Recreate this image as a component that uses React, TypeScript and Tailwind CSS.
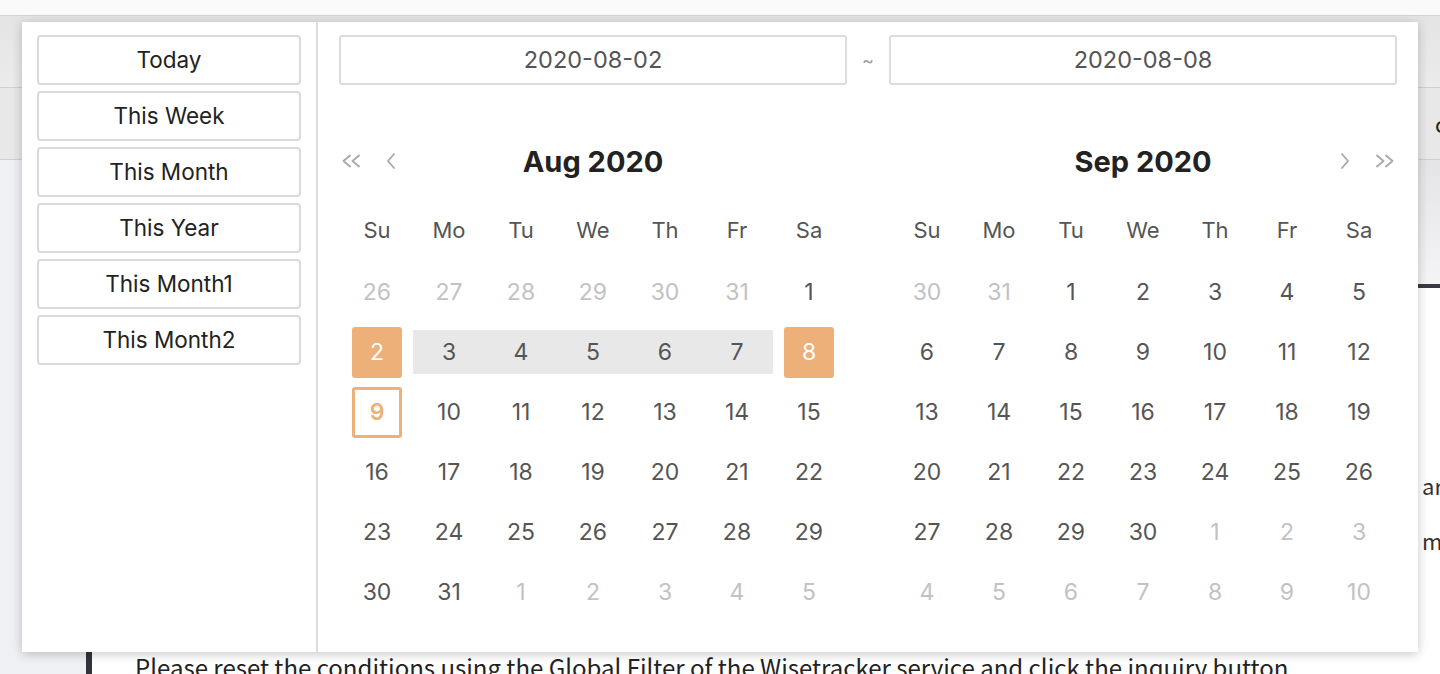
import React from "react";

type Cell = { d: number; muted?: boolean; kind?: "start" | "end" | "range" | "today" };

const aug: Cell[] = [
  ...[26, 27, 28, 29, 30, 31].map((d) => ({ d, muted: true })),
  { d: 1 },
  { d: 2, kind: "start" },
  ...[3, 4, 5, 6, 7].map((d) => ({ d, kind: "range" as const })),
  { d: 8, kind: "end" },
  { d: 9, kind: "today" },
  ...Array.from({ length: 22 }, (_, i) => ({ d: 10 + i })),
  ...[1, 2, 3, 4, 5].map((d) => ({ d, muted: true })),
];

const sep: Cell[] = [
  ...[30, 31].map((d) => ({ d, muted: true })),
  ...Array.from({ length: 30 }, (_, i) => ({ d: 1 + i })),
  ...[1, 2, 3, 4, 5, 6, 7, 8, 9, 10].map((d) => ({ d, muted: true })),
];

const weekdays = ["Su", "Mo", "Tu", "We", "Th", "Fr", "Sa"];

function DoubleLeft() {
  return (
    <svg width="22" height="14" viewBox="0 0 22 14" fill="none" stroke="#aaaaaa" strokeWidth="1.9" strokeLinecap="round" strokeLinejoin="round">
      <path d="M10 1.5 L3.5 7 L10 12.5" />
      <path d="M19 1.5 L12.5 7 L19 12.5" />
    </svg>
  );
}
function SingleLeft() {
  return (
    <svg width="12" height="18" viewBox="0 0 12 18" fill="none" stroke="#aaaaaa" strokeWidth="1.9" strokeLinecap="round" strokeLinejoin="round">
      <path d="M9 2 L3 9 L9 16" />
    </svg>
  );
}
function DoubleRight() {
  return (
    <svg width="22" height="14" viewBox="0 0 22 14" fill="none" stroke="#aaaaaa" strokeWidth="1.9" strokeLinecap="round" strokeLinejoin="round">
      <path d="M3 1.5 L9.5 7 L3 12.5" />
      <path d="M12 1.5 L18.5 7 L12 12.5" />
    </svg>
  );
}
function SingleRight() {
  return (
    <svg width="12" height="18" viewBox="0 0 12 18" fill="none" stroke="#aaaaaa" strokeWidth="1.9" strokeLinecap="round" strokeLinejoin="round">
      <path d="M3 2 L9 9 L3 16" />
    </svg>
  );
}

function DayCell({ c }: { c: Cell }) {
  if (c.kind === "start" || c.kind === "end") {
    return (
      <div className="h-[60px] flex items-center justify-center">
        <div className="w-[50px] h-[51px] rounded-[3px] bg-[#edb078] text-white flex items-center justify-center">{c.d}</div>
      </div>
    );
  }
  if (c.kind === "today") {
    return (
      <div className="h-[60px] flex items-center justify-center">
        <div className="w-[50px] h-[51px] rounded-[3px] border-[3px] border-[#edb078] text-[#edb078] font-semibold flex items-center justify-center">{c.d}</div>
      </div>
    );
  }
  if (c.kind === "range") {
    return (
      <div className="h-[60px] flex items-center">
        <div className="w-full h-[44px] bg-[#e8e8e8] text-[#555555] flex items-center justify-center">{c.d}</div>
      </div>
    );
  }
  return (
    <div className={"h-[60px] flex items-center justify-center " + (c.muted ? "text-[#c2c2c2]" : "text-[#555555]")}>{c.d}</div>
  );
}

function Calendar({ title, cells, side }: { title: string; cells: Cell[]; side: "left" | "right" }) {
  return (
    <div className="w-[508px]">
      <div className="h-[74px] grid grid-cols-[1fr_auto_1fr] items-center">
        <div className="flex items-center">
          {side === "left" && (
            <div className="flex items-center pl-[1px] gap-[23px]">
              <DoubleLeft />
              <SingleLeft />
            </div>
          )}
        </div>
        <div className="text-[29px] font-bold text-[#222222] leading-none">{title}</div>
        <div className="flex items-center justify-end">
          {side === "right" && (
            <div className="flex items-center pr-[1px] gap-[23px]">
              <SingleRight />
              <DoubleRight />
            </div>
          )}
        </div>
      </div>
      <div className="px-[2px]">
        <div className="grid grid-cols-7 h-[64px] items-center text-center text-[#555555] text-[22px]">
          {weekdays.map((w) => (
            <div key={w}>{w}</div>
          ))}
        </div>
        <div className="grid grid-cols-7 text-center text-[23px]">
          {cells.map((c, i) => (
            <DayCell key={i} c={c} />
          ))}
        </div>
      </div>
    </div>
  );
}

export default function App() {
  const presets = ["Today", "This Week", "This Month", "This Year", "This Month1", "This Month2"];
  return (
    <div className="relative w-[1440px] h-[674px] overflow-hidden bg-[#eef0f4] font-['Noto_Sans_CJK_KR',sans-serif]">
      {/* background page */}
      <div className="h-[16px] bg-[#fafafa] border-b border-[#d4d4d4]" />
      <div className="h-[72px] bg-gradient-to-b from-[#e4e4e4] to-[#ebebeb] border-b border-[#d0d0d0]" />
      <div className="h-[72px] bg-[#e8e8e8] border-b border-[#d0d0d0] flex items-center justify-end">
        <div className="w-[5px] overflow-hidden whitespace-nowrap text-[22px] text-[#222222]">ca</div>
      </div>
      <div className="flex">
        <div className="w-[86px] shrink-0" />
        <div className="flex-1 bg-white">
          <div className="h-[124px] bg-gradient-to-b from-[#e4e4e6] to-[#f4f4f6]" />
          <div className="h-[4px] bg-[#3a3a44]" />
          <div className="flex justify-end">
            <div className="w-[18px] overflow-hidden whitespace-nowrap pt-[170px] text-[22px] leading-[55px] text-[#333333]">
              <div>are</div>
              <div>m</div>
            </div>
          </div>
          <div className="mt-[82px] border-l-[6px] border-[#33333d] pl-[43px] text-[24px] leading-[33px] text-[#222222] whitespace-nowrap">
            Please reset the conditions using the Global Filter of the Wisetracker service and click the inquiry button
          </div>
        </div>
      </div>

      {/* date range popup */}
      <div className="absolute left-[22px] top-[22px] w-[1396px] h-[630px] bg-white shadow-[0_2px_10px_rgba(0,0,0,0.22)] flex font-['Inter',sans-serif] text-[22px]">
        <div className="w-[296px] shrink-0 border-r-2 border-[#dddddd] pl-[15px] pt-[13px] flex flex-col gap-[6px]">
          {presets.map((p) => (
            <div key={p} className="w-[264px] h-[50px] border-2 border-[#dadada] rounded-[4px] flex items-center justify-center text-[#222222] text-[22.5px]">
              {p}
            </div>
          ))}
        </div>
        <div className="flex-1 pl-[21px] pr-[21px] pt-[13px]">
          <div className="flex items-center">
            <div className="w-[508px] h-[50px] border-2 border-[#dddddd] rounded-[3px] flex items-center justify-center text-[#555555] text-[23.5px]">2020-08-02</div>
            <div className="w-[42px] text-center text-[#999999] text-[18px]">~</div>
            <div className="w-[508px] h-[50px] border-2 border-[#dddddd] rounded-[3px] flex items-center justify-center text-[#555555] text-[23.5px]">2020-08-08</div>
          </div>
          <div className="mt-[39px] flex gap-[42px]">
            <Calendar title="Aug 2020" cells={aug} side="left" />
            <Calendar title="Sep 2020" cells={sep} side="right" />
          </div>
        </div>
      </div>
    </div>
  );
}
